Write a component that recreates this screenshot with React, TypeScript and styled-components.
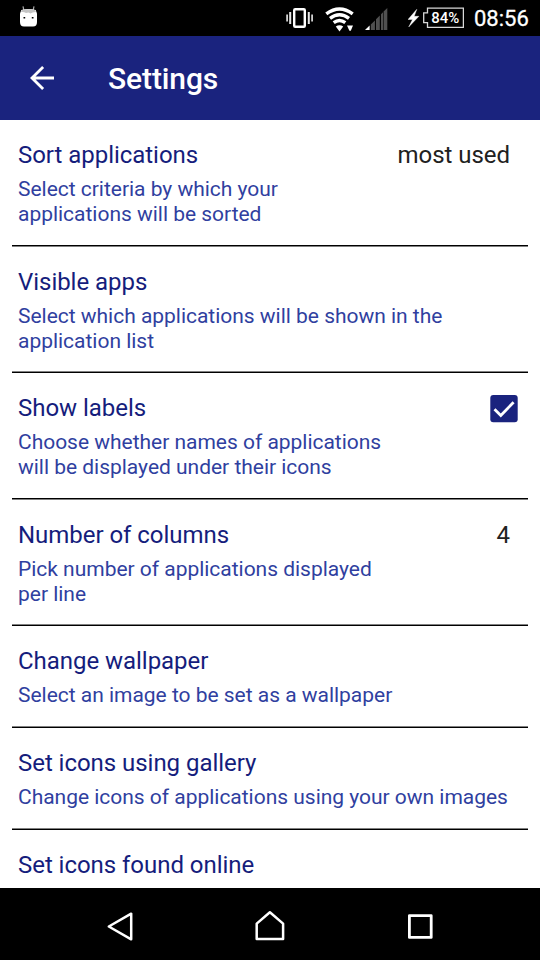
import React from "react";
import styled, { createGlobalStyle } from "styled-components";

const GlobalStyle = createGlobalStyle`
  * { box-sizing: border-box; }
  body { margin: 0; background: #fff; font-family: Roboto, sans-serif; }
`;

const Screen = styled.div`
  display: flex;
  flex-direction: column;
  width: 540px;
  height: 960px;
  overflow: hidden;
  background: #fff;
`;

const StatusBar = styled.header`
  display: flex;
  flex: none;
  align-items: center;
  justify-content: space-between;
  height: 36px;
  padding: 0 11px 0 19px;
  background: #000;
`;

const StatusGroup = styled.div`
  display: flex;
  align-items: center;
  height: 36px;
`;

const StatusIcon = styled.svg<{ $gap?: number }>`
  display: block;
  flex: none;
  margin-right: ${(p) => p.$gap ?? 0}px;
`;

const Clock = styled.time`
  width: 55px;
  color: #fff;
  font-size: 22px;
  line-height: 36px;
  font-weight: 400;
  padding-top: 1px;
  white-space: nowrap;
  -webkit-text-stroke: 0.3px #fff;
`;

const AppBar = styled.div`
  display: flex;
  flex: none;
  align-items: center;
  height: 84px;
  padding-left: 24px;
  background: #1a237e;
`;

const BackButton = styled.button`
  display: flex;
  width: 36px;
  height: 36px;
  margin: 0 48px 0 0;
  padding: 0;
  border: 0;
  background: none;
`;

const AppTitle = styled.h1`
  margin: 2px 0 0;
  color: #fff;
  font-size: 30px;
  line-height: 36px;
  font-weight: 500;
  letter-spacing: -0.1px;
`;

const List = styled.main`
  flex: 1;
  min-height: 0;
  overflow: hidden;
  padding: 0 12px;
`;

const Row = styled.section<{ $height: number }>`
  height: ${(p) => p.$height}px;
  padding: 21px 6px 0;
`;

const Divider = styled.div<{ $softTop: boolean }>`
  height: 2px;
  background: linear-gradient(
    ${(p) => (p.$softTop ? "#808080 50%, #000 50%" : "#000 50%, #808080 50%")}
  );
`;

const RowHead = styled.div`
  display: flex;
  justify-content: space-between;
  height: 28px;
  padding-right: 12px;
`;

const RowTitle = styled.h2`
  margin: 0;
  color: #151d7c;
  font-size: 24px;
  line-height: 28px;
  font-weight: 400;
  letter-spacing: -0.04px;
`;

const RowValue = styled.span`
  color: #212121;
  font-size: 24px;
  line-height: 28px;
  letter-spacing: -0.04px;
`;

const Summary = styled.p`
  margin: 8px 0 0;
  color: #303f9f;
  font-size: 21px;
  line-height: 25px;
  letter-spacing: -0.02px;
  white-space: pre-line;
`;

const CheckMark = styled.svg`
  display: block;
  margin: -3px -12px 0 0;
`;

const NavBar = styled.nav`
  display: flex;
  flex: none;
  align-items: center;
  justify-content: center;
  height: 72px;
  background: #000;
`;

const NavButton = styled.button`
  width: 150px;
  height: 72px;
  padding: 0;
  border: 0;
  background: none;

  svg {
    display: block;
  }
`;

const BatteryText = styled.text`
  font: 500 15px Roboto, sans-serif;
  fill: #fff;
`;

type Setting = {
  title: string;
  summary: string;
  height: number;
  softTop?: boolean;
  value?: string;
  checked?: boolean;
};

const settings: Setting[] = [
  { title: "Sort applications", summary: "Select criteria by which your\napplications will be sorted", value: "most used", height: 125 },
  { title: "Visible apps", summary: "Select which applications will be shown in the\napplication list", height: 124, softTop: true },
  { title: "Show labels", summary: "Choose whether names of applications\nwill be displayed under their icons", checked: true, height: 125 },
  { title: "Number of columns", summary: "Pick number of applications displayed\nper line", value: "4", height: 124, softTop: true },
  { title: "Change wallpaper", summary: "Select an image to be set as a wallpaper", height: 100, softTop: true },
  { title: "Set icons using gallery", summary: "Change icons of applications using your own images", height: 100, softTop: true },
  { title: "Set icons found online", summary: "", height: 100 },
];

function StatusIcons() {
  return (
    <>
      <StatusIcon width="28" height="36" $gap={11}>
        <rect x="8.2" y="9.2" width="10.6" height="17.6" rx="1" fill="none" stroke="#fff" strokeWidth="2.4" />
        <path d="M4.2 12v12M22.8 12v12" stroke="#e8e8e8" strokeWidth="2" />
        <path d="M1.1 14.5v7M26.1 14.5v7" stroke="#d0d0d0" strokeWidth="1.8" />
      </StatusIcon>
      <StatusIcon width="30" height="36" $gap={10}>
        <g fill="none" stroke="#fff" strokeWidth="3.4">
          <path d="M1.3 13.8Q14.5 4 27.7 13.8" />
          <path d="M5 18.3Q14.5 11.2 24 18.3" />
          <path d="M8.7 22.7Q14.5 18.3 20.3 22.7" />
        </g>
        <path d="M10.8 26.6Q14.5 24 18.2 26.6L14.5 31.5ZM22 25.5h6L25.8 30.8h-1.4Z" fill="#fff" />
      </StatusIcon>
      <StatusIcon width="23" height="36" $gap={20}>
        <path d="M0 30L4.6 25.5V30Z" fill="#fff" />
        <path d="M5.8 24.4L9.9 20.4V30H5.8ZM11 19.3L14.8 15.5V30H11ZM16 14.3L18 12.3V30H16ZM18.6 11.5L22.3 8V30H18.6Z" fill="#505050" />
      </StatusIcon>
      <StatusIcon width="56" height="36" $gap={10}>
        <path d="M8.8 9.3L0 19.5H4.5L.7 27L10.9 16.3H6.2Z" fill="#fff" stroke="#fff" strokeWidth="0.4" />
        <path d="M19.5 8.2H55.4V27.3H19.5V22.7H15.7V12.8H19.5Z" fill="none" stroke="#d8d8d8" strokeWidth="1.3" />
        <BatteryText x="23.3" y="23.3" textLength="28" lengthAdjust="spacingAndGlyphs">84%</BatteryText>
      </StatusIcon>
    </>
  );
}

export default function App() {
  return (
    <>
      <GlobalStyle />
      <Screen>
        <StatusBar>
          <StatusIcon width="20" height="36">
            <path d="M4.8 10L4 6.3M14.2 10L15 6.3" stroke="#aaa" strokeWidth="1.2" />
            <path d="M2.3 10Q9.5 8 16.7 10L18 13.5V22Q18 26.5 14 26.5H5Q1 26.5 1 22V13.5Z" fill="#fff" />
            <path d="M2 12L3 10Q9.5 8.6 16 10L17 12Q13 12 11.5 13.5L9.5 12.5L7 13Q5 11.5 2 12Z" fill="#c4c4c4" />
            <path d="M4.5 17H6.2V18.6H4.5ZM12.8 17H14.5V18.6H12.8Z" fill="#000" />
          </StatusIcon>
          <StatusGroup>
            <StatusIcons />
            <Clock>08:56</Clock>
          </StatusGroup>
        </StatusBar>
        <AppBar>
          <BackButton aria-label="Back">
            <svg width="36" height="36" fill="none" stroke="#fff" strokeWidth="2.8">
              <path d="M30 18H8M19.1 7L8 18L19.1 29" />
            </svg>
          </BackButton>
          <AppTitle>Settings</AppTitle>
        </AppBar>
        <List>
          {settings.map((s) => (
            <React.Fragment key={s.title}>
              <Row $height={s.height}>
                <RowHead>
                  <RowTitle>{s.title}</RowTitle>
                  {s.value && <RowValue>{s.value}</RowValue>}
                  {s.checked && (
                    <CheckMark width="36" height="36">
                      <rect x="4.3" y="4" width="27.4" height="27.2" rx="3" fill="#1a237e" />
                      <path d="M8.5 18.2L14.8 24.4L27.6 11.2" fill="none" stroke="#fff" strokeWidth="2.8" />
                    </CheckMark>
                  )}
                </RowHead>
                <Summary>{s.summary}</Summary>
              </Row>
              <Divider $softTop={!!s.softTop} />
            </React.Fragment>
          ))}
        </List>
        <NavBar>
          <NavButton aria-label="Back">
            <svg width="150" height="72" fill="none" stroke="#fff" strokeWidth="2.5" strokeLinejoin="round">
              <path d="M63.8 38.5L86.2 25.7V51.3Z" />
            </svg>
          </NavButton>
          <NavButton aria-label="Home">
            <svg width="150" height="72" fill="none" stroke="#fff" strokeWidth="2.5" strokeLinejoin="round">
              <path d="M61.8 51.2V35.8L75 24.5L88.2 35.8V51.2Z" transform="translate(-0.1 -0.2)" />
            </svg>
          </NavButton>
          <NavButton aria-label="Recent apps">
            <svg width="150" height="72" fill="none" stroke="#fff" strokeWidth="2.8" strokeLinejoin="round">
              <rect x="64.4" y="27.6" width="21.8" height="21.8" />
            </svg>
          </NavButton>
        </NavBar>
      </Screen>
    </>
  );
}
